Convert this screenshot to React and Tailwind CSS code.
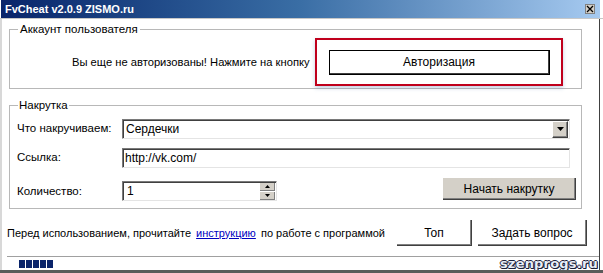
import React from "react";

function RaisedBtn({ className = "", children }) {
  return (
    <div
      className={
        "shrink-0 flex items-center justify-center whitespace-nowrap border-r border-b border-[#404040] shadow-[inset_-1px_-1px_0_#808080] " +
        className
      }
    >
      {children}
    </div>
  );
}

export default function App() {
  return (
    <div className="w-[603px] h-[273px] overflow-hidden bg-white flex flex-col font-['Liberation_Sans',sans-serif] text-[11px] text-black border-b-[3px] border-b-[#5a5a5a] whitespace-nowrap">
      {/* Title bar */}
      <div className="h-[18px] ml-[1px] mr-[3px] flex items-center bg-linear-to-r from-[#0a246a] via-[#3a6ea5] to-[#a6caf0] pl-[4px] pr-[5px]">
        <span className="text-white font-bold text-[11px] tracking-[0px] font-['Liberation_Sans',sans-serif]">
          FvCheat v2.0.9 ZISMO.ru
        </span>
        <div className="ml-auto w-[10px] h-[10px] bg-[#d4d0c8] border border-[#808080] flex items-center justify-center">
          <svg width="8" height="8" viewBox="0 0 8 8">
            <path d="M1 1L7 7M7 1L1 7" stroke="#000" strokeWidth="1.3" />
          </svg>
        </div>
      </div>
      <div className="h-[1px] bg-[#c8c8c8]" />

      {/* Body */}
      <div className="flex-1 flex flex-col border-l-[2px] border-l-[#d8d8d8] border-r border-r-[#404040] mr-[3px] pl-[5px]">
        {/* Group 1 */}
        <fieldset className="mt-[4px] ml-[2px] w-[573px] border border-[#b8b8b8]">
          <legend className="ml-[8px] px-[2px] h-[13px] leading-[13px] text-[11.5px]">
            Аккаунт пользователя
          </legend>
          <div className="flex items-center pt-[2px] pb-[2px]">
            <span className="pl-[62px] text-[11.2px]">
              Вы еще не авторизованы! Нажмите на кнопку
            </span>
            <div className="ml-auto mr-[18px] w-[248px] h-[48px] border-2 border-[#c0001c] shadow-[0_2px_4px_rgba(120,150,190,0.45)] flex items-center justify-center">
              <div className="w-[221px] h-[25px] bg-white border border-black shadow-[inset_-1px_-1px_0_#404040] flex items-center justify-center text-[12px]">
                Авторизация
              </div>
            </div>
          </div>
        </fieldset>

        {/* Group 2 */}
        <fieldset className="mt-[10px] ml-[2px] w-[573px] border border-[#b8b8b8]">
          <legend className="ml-[8px] px-[1px] h-[13px] leading-[13px] text-[11.5px]">
            Накрутка
          </legend>
          <div className="flex flex-col pl-[7px] pr-[4px] pb-[7px]">
            <div className="mt-[7px] flex items-center h-[20px]">
              <span className="w-[105px] text-[11.5px]">Что накручиваем:</span>
              <div className="w-[448px] h-[20px] flex items-center border border-t-[#7a7a7a] border-l-[#7a7a7a] border-r-[#e4e4e4] border-b-[#e4e4e4] shadow-[inset_1px_1px_0_#404040] bg-white pl-[3px] pr-[1px]">
                <span className="text-[12px]">Сердечки</span>
                <div className="ml-auto w-[16px] h-[17px] bg-[#d4d0c8] border border-t-white border-l-white border-r-[#404040] border-b-[#404040] shadow-[inset_-1px_-1px_0_#808080] flex items-center justify-center">
                  <svg width="7" height="4" viewBox="0 0 7 4">
                    <path d="M0 0H7L3.5 4Z" fill="#000" />
                  </svg>
                </div>
              </div>
            </div>
            <div className="mt-[9px] flex items-center h-[20px]">
              <span className="w-[105px] text-[11.5px]">Ссылка:</span>
              <div className="w-[448px] h-[20px] flex items-center border border-t-[#7a7a7a] border-l-[#7a7a7a] border-r-[#e4e4e4] border-b-[#e4e4e4] shadow-[inset_1px_1px_0_#404040] bg-white pl-[2px]">
                <span className="text-[12px]">http://vk.com/</span>
              </div>
            </div>
            <div className="mt-[10px] flex items-start h-[23px]">
              <span className="w-[105px] text-[11.5px] mt-[5px]">Количество:</span>
              <div className="mt-[3px] w-[155px] h-[20px] flex items-center border border-t-[#7a7a7a] border-l-[#7a7a7a] border-r-[#e4e4e4] border-b-[#e4e4e4] shadow-[inset_1px_1px_0_#404040] bg-white pl-[4px] pr-[1px]">
                <span className="text-[12px]">1</span>
                <div className="ml-auto flex flex-col gap-[1px]">
                  <div className="w-[15px] h-[8px] bg-[#d4d0c8] border-r border-b border-[#808080] flex items-center justify-center">
                    <svg width="5" height="3" viewBox="0 0 5 3">
                      <path d="M0 3H5L2.5 0Z" fill="#000" />
                    </svg>
                  </div>
                  <div className="w-[15px] h-[8px] bg-[#d4d0c8] border-r border-b border-[#808080] flex items-center justify-center">
                    <svg width="5" height="3" viewBox="0 0 5 3">
                      <path d="M0 0H5L2.5 3Z" fill="#000" />
                    </svg>
                  </div>
                </div>
              </div>
              <RaisedBtn className="ml-auto mr-[1px] w-[133px] h-[22px] bg-[#d4d0c8] text-[12px]">
                Начать накрутку
              </RaisedBtn>
            </div>
          </div>
        </fieldset>

        {/* Bottom row */}
        <div className="mt-[11px] flex items-center h-[26px] pr-[12px]">
          <span className="text-[11px]">
            Перед использованием, прочитайте{" "}
            <span className="text-[#0000c0] underline ml-[2px] mr-[2px]">инструкцию</span>{" "}
            по работе с программой
          </span>
          <RaisedBtn className="ml-auto w-[75px] h-[26px] bg-white text-[12px]">Топ</RaisedBtn>
          <RaisedBtn className="ml-[6px] w-[109px] h-[26px] bg-white text-[12px]">
            Задать вопрос
          </RaisedBtn>
        </div>

        {/* Status bar */}
        <div className="mt-[10px] border-t border-[#a0a0a0] flex-1 flex items-center">
          <div className="ml-[12px] flex gap-[1px]">
            <div className="w-[6px] h-[8px] bg-[#0a246a]" />
            <div className="w-[6px] h-[8px] bg-[#0a246a]" />
            <div className="w-[6px] h-[8px] bg-[#0a246a]" />
            <div className="w-[6px] h-[8px] bg-[#0a246a]" />
            <div className="w-[6px] h-[8px] bg-[#0a246a]" />
          </div>
          <span className="ml-auto mr-[1px] text-[13px] leading-[12px] font-black font-['DejaVu_Sans',sans-serif] text-[#e8eef8] tracking-[0.2px] [text-shadow:1px_0_0_#1a2038,-1px_0_0_#1a2038,0_1px_0_#1a2038,0_-1px_0_#1a2038,1px_1px_0_#1a2038]">
            szenprogs.ru
          </span>
        </div>
      </div>
    </div>
  );
}
